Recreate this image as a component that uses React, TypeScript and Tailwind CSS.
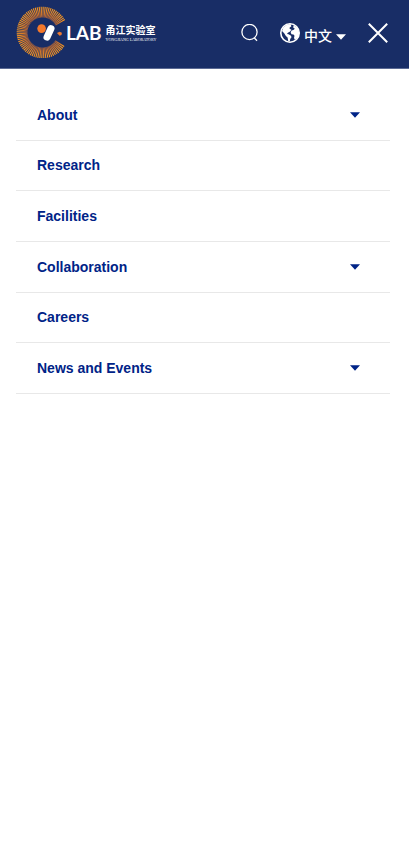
const MENU = [
  { label: "About", children: true },
  { label: "Research", children: false },
  { label: "Facilities", children: false },
  { label: "Collaboration", children: true },
  { label: "Careers", children: false },
  { label: "News and Events", children: true },
];

// rays run clockwise from the lower right, leaving a gap on the right side
const RAYS = Array.from({ length: 67 }, (_, i) => 33 + i * 4.5);

function Caret({ className }: { className: string }) {
  return (
    <svg viewBox="0 0 10 6" className={className} fill="currentColor" aria-hidden="true">
      <path d="M0 0.3h10L5 5.8z" />
    </svg>
  );
}

function Globe() {
  return (
    <svg viewBox="0 0 20 20" className="size-5" fill="currentColor" aria-hidden="true">
      <circle cx="10" cy="10" r="9.2" fill="none" stroke="currentColor" strokeWidth="1.6" />
      <path d="M3.4 4.6L6.5 2l4-.9.9 2.2-1.9 1.5.3 1.2 1.6.6-1.3 2-2.2 1.1-.9 1.3 1.6.3 2.4 1.4.5 1.6-1.3 1.6-.4 2.6-1.6-.5-.6-3.4-1.7-1.7-1.7-2.6L2 8z" />
      <path d="M13.6 2.2l3.8 2.6 1.9 5.2-1.6 4.8-2.8 1.9-.9-1.6.5-2.3-1-1.3-2-.3-.8-1.6.8-2.1 1.9-.6 1.4-1.1-1.6-1.3z" />
    </svg>
  );
}

function LogoMark() {
  return (
    <svg viewBox="0 0 52 52" className="size-[52px] shrink-0" aria-hidden="true">
      <defs>
        <radialGradient id="ray" gradientUnits="userSpaceOnUse" cx="26.5" cy="26.5" r="25.5">
          <stop offset="0.55" stopColor="#7d4f4a" />
          <stop offset="0.7" stopColor="#c8702c" />
          <stop offset="1" stopColor="#ff9a1f" />
        </radialGradient>
      </defs>
      {RAYS.map((deg) => {
        const a = (deg * Math.PI) / 180;
        const c = Math.cos(a);
        const s = Math.sin(a);
        return (
          <path
            key={deg}
            d={`M${26.5 + 15 * c} ${26.5 + 15 * s}L${26.5 + 25.8 * c} ${26.5 + 25.8 * s}`}
            stroke="url(#ray)"
            strokeWidth="1.1"
          />
        );
      })}
      <circle cx="25.6" cy="22.6" r="4.3" fill="#f5782a" />
      <path d="M35 22.6L31 31.2" stroke="#fff" strokeWidth="7" strokeLinecap="round" />
      <path d="M41 27l2.6-1.3 2.3 1.1-.4 2.2-2 .8z" fill="#ee7a30" />
    </svg>
  );
}

function Header() {
  return (
    <header className="flex h-[69px] items-center border-b border-[#5b6a94] bg-[#182d66] pl-4 pr-[21px] pb-1 text-white">
      <a href="#" aria-label="Yongjiang Laboratory" className="flex items-center">
        <LogoMark />
        <span className="-ml-[2px] pt-px font-['Lato',sans-serif] text-[19px] leading-5 font-bold">LAB</span>
        <span className="ml-1 flex flex-col pt-[3px]">
          <span className="font-['Noto_Sans_CJK_SC',sans-serif] text-[10px] leading-3 font-bold">甬江实验室</span>
          <span className="font-['Liberation_Serif',serif] text-[4px] leading-[8px] whitespace-nowrap">
            YONGJIANG LABORATORY
          </span>
        </span>
      </a>
      <div className="ml-auto flex items-center pt-px">
        <button type="button" aria-label="Search">
          <svg viewBox="0 0 18 18" className="size-[18px]" fill="none" stroke="currentColor" aria-hidden="true">
            <circle cx="8.5" cy="8" r="7.6" strokeWidth="1.3" />
            <path d="M13.4 14l2.6 2.8" strokeWidth="1.3" />
          </svg>
        </button>
        <button type="button" className="ml-[21px] flex items-center">
          <Globe />
          <span className="ml-1 mt-1 font-['Noto_Sans_CJK_SC',sans-serif] text-[14px] leading-5 font-medium">
            中文
          </span>
          <Caret className="ml-1 mt-2 h-[6px] w-[10px]" />
        </button>
        <button type="button" aria-label="Close menu" className="ml-[22px]">
          <svg viewBox="0 0 20 20" className="size-5" stroke="currentColor" strokeWidth="2" aria-hidden="true">
            <path d="M0.8 0.8l18.4 18.4M19.2 0.8L0.8 19.2" />
          </svg>
        </button>
      </div>
    </header>
  );
}

export default function App() {
  return (
    <div className="min-h-screen bg-white font-['Liberation_Sans',Arial,sans-serif]">
      <Header />
      <nav className="pt-[21px] pr-[19px] pl-4">
        <ul className="grid min-h-[304px] auto-rows-fr">
          {MENU.map((item) => (
            <li
              key={item.label}
              className="flex items-center justify-between border-b border-[#e8e8e8] pr-[30px] pl-[21px] text-[14px] leading-5 font-bold text-[#002387]"
            >
              <a href="#">{item.label}</a>
              {item.children && (
                <button type="button" aria-label={`Expand ${item.label}`}>
                  <Caret className="h-[6px] w-[10px]" />
                </button>
              )}
            </li>
          ))}
        </ul>
      </nav>
    </div>
  );
}
